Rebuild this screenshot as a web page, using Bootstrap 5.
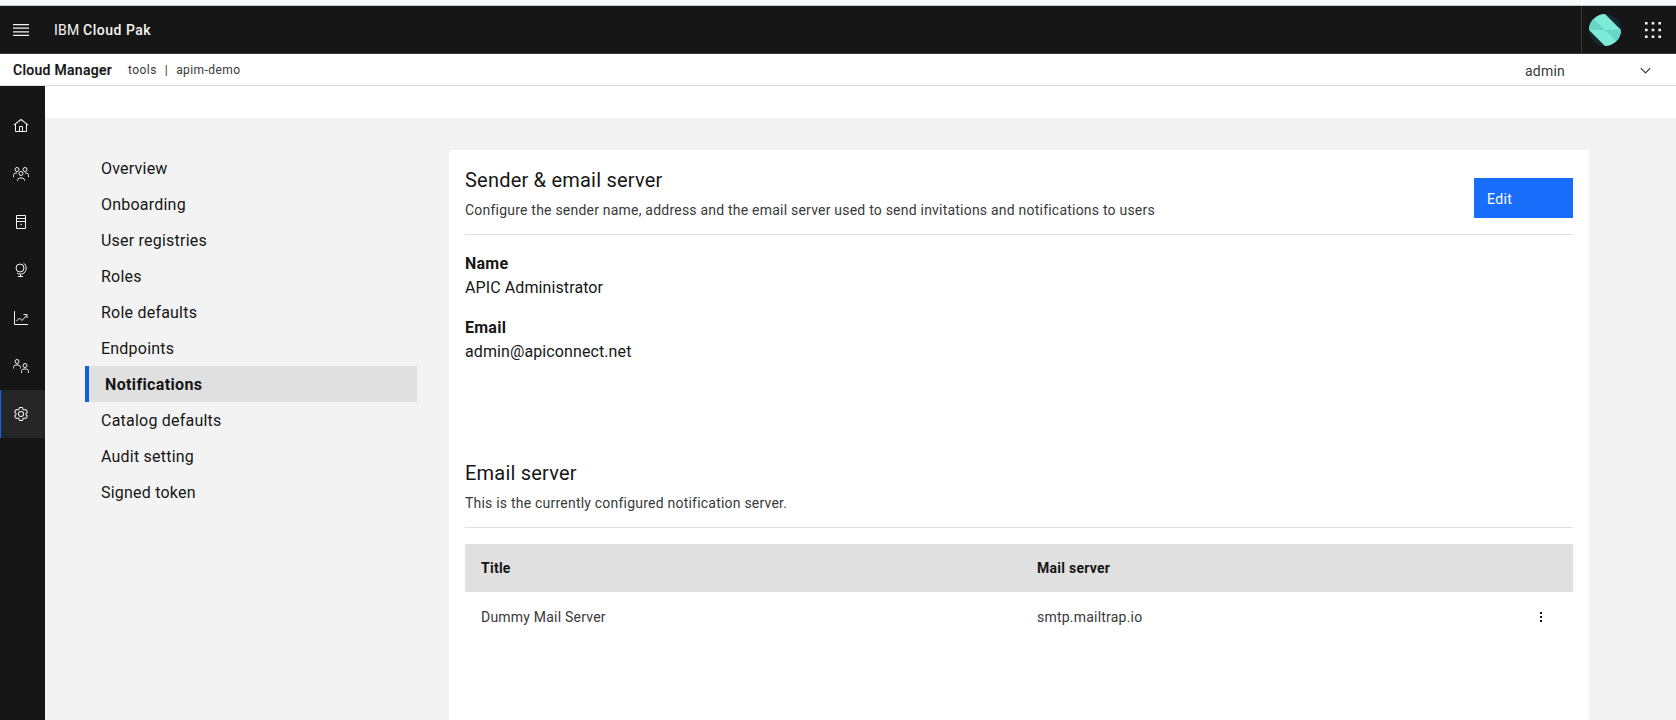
<!DOCTYPE html>
<html lang="en">
<head>
<meta charset="utf-8">
<meta name="viewport" content="width=device-width, initial-scale=1">
<title>Cloud Manager</title>
<link href="https://cdn.jsdelivr.net/npm/bootstrap@5.3.0/dist/css/bootstrap.min.css" rel="stylesheet">
<style>
body{font-family:Roboto,"Noto Sans",sans-serif;font-size:14px;line-height:20px;letter-spacing:.215px;color:#161616;background:#f3f3f3;height:720px;overflow:hidden}
svg{display:block;flex:none}
.top-strip{height:6px;background:#f8f9fb;border-bottom:1px solid #c3cbca}
.shell-bar{height:48px;background:#161616;border-bottom:1px solid #393939;color:#f4f4f4;padding:0 13px 0 11px}
.brand{margin-left:23px;padding-top:1px}
.brand strong{font-weight:500;letter-spacing:.5px}
.account{width:43px;border-left:1px solid #393939;padding-left:7px;margin-right:19px}
.product-bar{height:32px;background:#fff;border-bottom:1px solid #dcdcdc;padding:1px 25px 0 13px}
.product-bar strong{font-weight:500;letter-spacing:.28px;width:115px;-webkit-text-stroke:.2px #161616}
.crumbs{font-size:12px;letter-spacing:.43px;color:#393939}
.user-menu{width:126px;color:#393939;padding-top:1px;letter-spacing:.2px}
.rail{width:45px;background:#161616;padding-top:16px;color:#f4f4f4}
.rail a{height:48px;padding-left:13px;color:inherit}
.rail a.active{background:#262626;padding-left:12px;border-left:1px solid #0f62fe}
.blank-bar{height:32px;background:#fff}
.side-menu{width:332px;margin:32px 32px 0 40px;font-size:16px;letter-spacing:.22px}
.side-menu a{height:36px;line-height:37px;padding:0 16px;color:#161616;text-decoration:none}
.side-menu a.active{background:#e0e0e0;border-left:4px solid #0f5fe6;font-weight:700;letter-spacing:.36px}
.panel{background:#fff;margin:32px 87px 0 0;padding:16px 16px 0}
.section-head{padding-bottom:14px;border-bottom:1px solid #e0e0e0}
h2{font-size:20px;line-height:28px;font-weight:400;letter-spacing:.21px;margin:0 0 6px}
.section-head p{color:#393939;margin:0}
.edit-btn{width:99px;height:40px;margin-top:12px;border:0;border-radius:0;background:#196dfb;color:#fff;font-size:14px;line-height:20px;letter-spacing:.35px;padding:2px 13px 0;text-align:left}
.facts{font-size:16px;line-height:24px;padding-top:17px;margin-bottom:95px;letter-spacing:.1px}
.facts dt{font-weight:700;letter-spacing:.25px}
.facts dd{margin-bottom:16px}
.facts dd:last-child{margin-bottom:0}
.servers{table-layout:fixed;margin:16px 0 0}
.servers>:not(caption)>*>*{padding:0 16px;border:0;vertical-align:middle;color:#161616}
.servers thead tr{height:48px}
.servers thead th{background:#e0e0e0;font-weight:700;letter-spacing:.26px}
.servers tbody tr{height:50px}
.servers tbody td{color:#393939}
</style>
</head>
<body class="d-flex flex-column">
<div class="top-strip"></div>
<header class="shell-bar d-flex align-items-center">
  <svg width="20" height="20" viewBox="0 0 20 20" fill="#f4f4f4"><path d="M2 14.8h16V16H2zM2 11.2h16v1.2H2zM2 7.6h16v1.2H2zM2 4h16v1.2H2z"/></svg>
  <span class="brand">IBM <strong>Cloud Pak</strong></span>
  <div class="account ms-auto h-100 d-flex align-items-center">
    <svg width="32" height="32" viewBox="0 0 32 32"><clipPath id="round"><circle cx="16" cy="16" r="16"/></clipPath><g clip-path="url(#round)"><path fill="#182833" d="M0 0h32v32H0z"/><path fill="#7eebd8" d="M0 0h16l16 16v16H16L0 16z"/><path fill="#66d6c6" d="M16 16H0V0zM16 16h16v16z"/></g></svg>
  </div>
  <svg width="20" height="20" viewBox="0 0 20 20" fill="#f4f4f4"><path d="M2 2h2.6v2.6H2zM8.7 2h2.6v2.6H8.7zM15.4 2H18v2.6h-2.6zM2 8.7h2.6v2.6H2zM8.7 8.7h2.6v2.6H8.7zM15.4 8.7H18v2.6h-2.6zM2 15.4h2.6V18H2zM8.7 15.4h2.6V18H8.7zM15.4 15.4H18V18h-2.6z"/></svg>
</header>
<div class="product-bar d-flex align-items-center">
  <strong>Cloud Manager</strong>
  <div class="crumbs d-flex"><span>tools</span><span class="mx-2">|</span><span>apim-demo</span></div>
  <div class="user-menu ms-auto d-flex align-items-center justify-content-between"><span>admin</span>
    <svg width="11" height="8" viewBox="0 0 11 8" fill="none" stroke="#393939" stroke-width="1.2"><path d="M.8 1.2 5.5 5.9l4.700-4.700"/></svg>
  </div>
</div>
<div class="d-flex flex-grow-1">
  <nav class="rail d-flex flex-column flex-shrink-0">
    <a class="d-flex align-items-center"><svg width="16" height="16" viewBox="0 0 32 32" fill="currentColor"><path d="M16.612 2.214a1.010 1.010 0 0 0-1.243 0L1 13.419l1.243 1.572L4 13.621V26a2 2 0 0 0 2 2h20a2 2 0 0 0 2-2V13.630L29.757 15 31 13.428ZM18 26h-4v-8h4Zm2 0v-8a2 2 0 0 0-2-2h-4a2 2 0 0 0-2 2v8H6V12.061l10-7.790 10 7.800V26Z"/></svg></a>
    <a class="d-flex align-items-center"><svg width="16" height="16" viewBox="0 0 32 32" fill="none" stroke="currentColor" stroke-width="2"><circle cx="8" cy="7" r="4"/><circle cx="24" cy="7" r="4"/><circle cx="16" cy="15" r="4"/><path d="M9 30v-1c0-3 2-5 5-5h4c3 0 5 2 5 5v1M1 22v-3c0-3 2-5 5-5h2M31 22v-3c0-3-2-5-5-5h-2"/></svg></a>
    <a class="d-flex align-items-center"><svg width="16" height="16" viewBox="0 0 32 32" fill="none" stroke="currentColor" stroke-width="2"><path d="M7 3h18v26H7zM7 9h18M7 15h18"/><path d="M15 20h2v2h-2z" stroke-width="1"/></svg></a>
    <a class="d-flex align-items-center"><svg width="16" height="16" viewBox="0 0 32 32" fill="none" stroke="currentColor" stroke-width="2"><circle cx="14" cy="12" r="8"/><path d="M21 2c7 5 7 15 1 20-4 3-10 3-14 0M15 24v5M10 29h10"/></svg></a>
    <a class="d-flex align-items-center"><svg width="16" height="16" viewBox="0 0 32 32" fill="none" stroke="currentColor" stroke-width="2"><path d="M3 2v27h27M7 22l6-6 5 5 9-10M21 9h7v7"/></svg></a>
    <a class="d-flex align-items-center"><svg width="16" height="16" viewBox="0 0 32 32" fill="none" stroke="currentColor" stroke-width="2"><circle cx="8" cy="7" r="4"/><circle cx="24" cy="15" r="4"/><path d="M1 21v-2c0-3 2-5 5-5h4c3 0 5 2 5 5v2M17 30v-3c0-3 2-5 5-5h4c3 0 5 2 5 5v3"/></svg></a>
    <a class="active d-flex align-items-center"><svg width="16" height="16" viewBox="0 0 32 32" fill="currentColor"><path d="M27 16.760c0-.25 0-.5 0-.76s0-.51 0-.77l1.920-1.680A2 2 0 0 0 29.300 11L26.940 7a2 2 0 0 0-1.730-1 2 2 0 0 0-.64.1l-2.430.82a11.350 11.350 0 0 0-1.310-.75l-.51-2.520a2 2 0 0 0-2-1.610H13.640a2 2 0 0 0-2 1.610l-.51 2.520a11.480 11.480 0 0 0-1.320.75L7.430 6.060A2 2 0 0 0 6.790 6 2 2 0 0 0 5.060 7L2.700 11a2 2 0 0 0 .41 2.510L5 15.240c0 .25 0 .5 0 .76s0 .51 0 .77L3.110 18.450A2 2 0 0 0 2.700 21L5.060 25a2 2 0 0 0 1.730 1 2 2 0 0 0 .64-.1l2.430-.82a11.350 11.350 0 0 0 1.310.75l.51 2.520a2 2 0 0 0 2 1.610h4.720a2 2 0 0 0 2-1.610l.51-2.520a11.480 11.480 0 0 0 1.320-.75l2.420.82a2 2 0 0 0 .64.1 2 2 0 0 0 1.730-1L29.300 21a2 2 0 0 0-.41-2.510ZM25.210 24l-3.430-1.160a8.860 8.860 0 0 1-2.710 1.570L18.360 28H13.640l-.71-3.550a9.360 9.360 0 0 1-2.700-1.570L6.790 24 4.430 20l2.720-2.400a8.900 8.900 0 0 1 0-3.130L4.430 12 6.790 8l3.430 1.160a8.860 8.860 0 0 1 2.710-1.570L13.640 4h4.720l.71 3.550a9.360 9.360 0 0 1 2.700 1.570L25.210 8 27.570 12l-2.720 2.400a8.900 8.900 0 0 1 0 3.130L27.570 20Z"/><path d="M16 22a6 6 0 1 1 6-6 5.940 5.940 0 0 1-6 6Zm0-10a3.910 3.910 0 0 0-4 4 3.910 3.910 0 0 0 4 4 3.910 3.910 0 0 0 4-4 3.910 3.910 0 0 0-4-4Z"/></svg></a>
  </nav>
  <div class="flex-grow-1 d-flex flex-column">
    <div class="blank-bar"></div>
    <div class="d-flex flex-grow-1">
      <nav class="side-menu d-flex flex-column flex-shrink-0">
        <a href="#">Overview</a>
        <a href="#">Onboarding</a>
        <a href="#">User registries</a>
        <a href="#">Roles</a>
        <a href="#">Role defaults</a>
        <a href="#">Endpoints</a>
        <a href="#" class="active">Notifications</a>
        <a href="#">Catalog defaults</a>
        <a href="#">Audit setting</a>
        <a href="#">Signed token</a>
      </nav>
      <main class="panel flex-grow-1">
        <div class="section-head d-flex justify-content-between align-items-start">
          <div>
            <h2>Sender &amp; email server</h2>
            <p>Configure the sender name, address and the email server used to send invitations and notifications to users</p>
          </div>
          <button type="button" class="btn edit-btn">Edit</button>
        </div>
        <dl class="facts">
          <dt>Name</dt>
          <dd>APIC Administrator</dd>
          <dt>Email</dt>
          <dd>admin@apiconnect.net</dd>
        </dl>
        <div class="section-head">
          <h2>Email server</h2>
          <p>This is the currently configured notification server.</p>
        </div>
        <table class="table servers">
          <colgroup><col style="width:556px"><col><col style="width:64px"></colgroup>
          <thead><tr><th>Title</th><th>Mail server</th><th></th></tr></thead>
          <tbody><tr><td>Dummy Mail Server</td><td>smtp.mailtrap.io</td>
            <td><svg class="ms-auto me-auto" width="2" height="10" viewBox="0 0 2 10" fill="#161616"><path d="M0 0h2v2H0zM0 4h2v2H0zM0 8h2v2H0z"/></svg></td></tr></tbody>
        </table>
      </main>
    </div>
  </div>
</div>
<script src="https://cdn.jsdelivr.net/npm/bootstrap@5.3.0/dist/js/bootstrap.bundle.min.js"></script>
</body>
</html>
